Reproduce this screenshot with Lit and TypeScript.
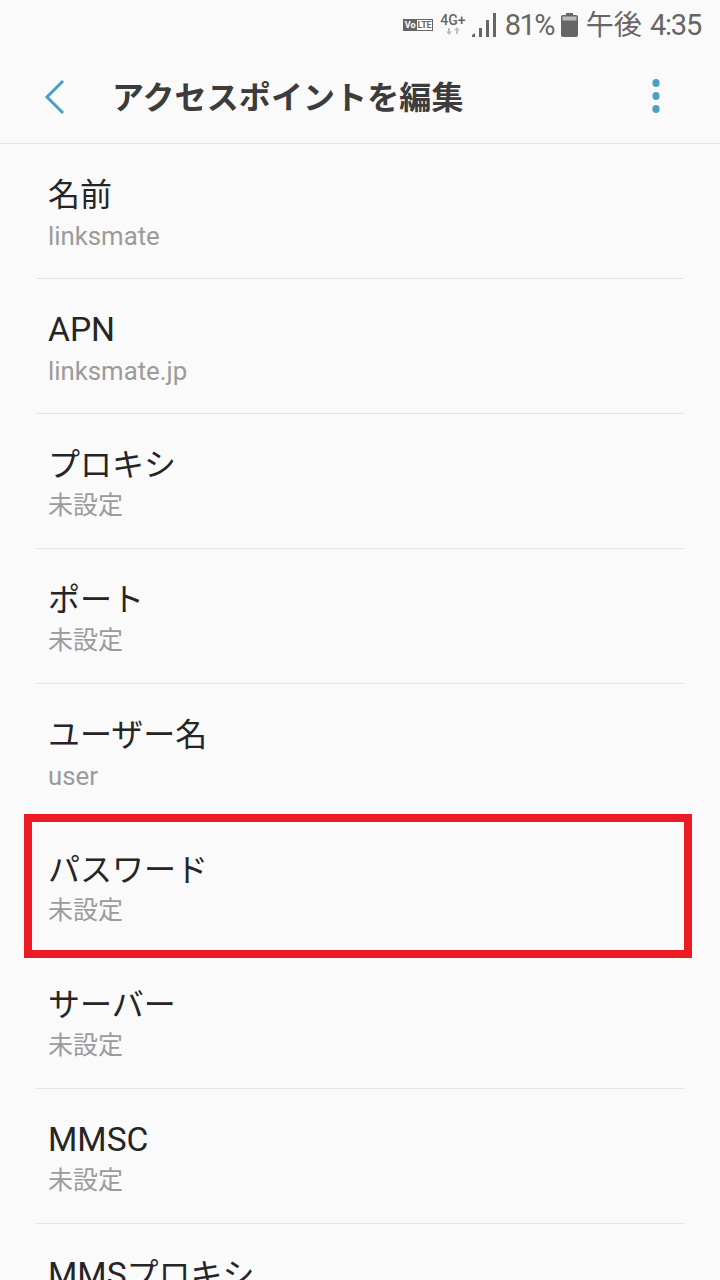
import { LitElement, html, css } from "lit";
import { customElement } from "lit/decorators.js";

const rows: [string, string][] = [
  ["名前", "linksmate"],
  ["APN", "linksmate.jp"],
  ["プロキシ", "未設定"],
  ["ポート", "未設定"],
  ["ユーザー名", "user"],
  ["パスワード", "未設定"],
  ["サーバー", "未設定"],
  ["MMSC", "未設定"],
  ["MMSプロキシ", "未設定"],
];

const runs = (text: string) =>
  text
    .split(/([\x20-\x7e]+)/)
    .filter(Boolean)
    .map((part) =>
      /^[\x20-\x7e]+$/.test(part) ? html`<span class="latin">${part}</span>` : part
    );

@customElement("app-root")
export class AppRoot extends LitElement {
  static styles = css`
    :host {
      display: block;
      width: 720px;
      height: 1280px;
      overflow: hidden;
      background: #fafafa;
      font-family: Roboto, "Noto Sans CJK JP", sans-serif;
    }
    .status {
      height: 50px;
      display: flex;
      justify-content: flex-end;
      align-items: center;
      padding-right: 19px;
      color: #666;
      font-size: 28px;
      line-height: 52px;
    }
    .volte {
      display: flex;
      width: 30px;
      height: 12px;
      margin-right: 7px;
      border: 1px solid #666;
      box-sizing: border-box;
      font-size: 9px;
      line-height: 10px;
      font-weight: 700;
      background: #fff;
    }
    .volte .vo { background: #666; color: #fff; padding: 0 1px; }
    .volte .lte { color: #666; padding-left: 1px; letter-spacing: -0.3px; }
    .net {
      width: 26px;
      height: 24px;
      margin-right: 6px;
      display: flex;
      flex-direction: column;
      align-items: center;
    }
    .net span {
      font-size: 14px;
      line-height: 14px;
      font-weight: 500;
      white-space: nowrap;
    }
    .net svg { display: block; }
    .signal { display: block; margin-right: 8px; }
    .battery { display: block; margin: 0 8px 0 7px; }
    .pct { font-size: 29px; letter-spacing: -1.6px; }
    .clock { white-space: nowrap; }
    .clock b { font-weight: 400; font-size: 29px; letter-spacing: -1.2px; margin-left: 8px; }
    .appbar {
      height: 94px;
      box-sizing: border-box;
      border-bottom: 1px solid #e6e6e6;
      display: flex;
      align-items: flex-start;
      padding: 26px 60px 0 44px;
    }
    .back { display: block; margin-top: 3px; }
    h1 {
      margin: 1px 0 0 46px;
      flex: 1;
      font-size: 32px;
      line-height: 42px;
      font-weight: 700;
      letter-spacing: 0.1px;
      color: #3c3c3c;
    }
    .more { display: block; margin-top: 2px; }
    .list { position: relative; }
    .row {
      height: 135px;
      box-sizing: border-box;
      margin: 0 36px;
      padding: 28px 12px 0;
      border-bottom: 1px solid #e4e4e4;
    }
    .title {
      font-size: 32px;
      line-height: 46px;
      color: #252525;
    }
    .sub {
      margin-top: 1px;
      font-size: 25px;
      line-height: 34px;
      color: #9b9b9b;
    }
    .latin { font-size: 1.05em; }
    .sub .latin { font-size: 1.03em; vertical-align: 1px; }
    .mark {
      position: absolute;
      left: 24px;
      top: 670px;
      width: 668px;
      height: 144px;
      box-sizing: border-box;
      border: 8px solid #ed1c24;
    }
  `;

  render() {
    return html`
      <div class="status">
        <div class="volte"><span class="vo">Vo</span><span class="lte">LTE</span></div>
        <div class="net">
          <span>4G+</span>
          <svg width="16" height="8" viewBox="0 0 16 8" fill="#bdbdbd">
            <path d="M4 8 1 4.5h2V1h2v3.5h2zM12 0l3 3.5h-2V7h-2V3.5H9z" />
          </svg>
        </div>
        <svg class="signal" width="25" height="24" viewBox="0 0 25 24" fill="#666">
          <path d="M0 24v-2l3-2v4zM7 24V15h3v9zM14 24V7h3v17zM21 24V0h3v24z" />
        </svg>
        <span class="pct">81%</span>
        <svg class="battery" width="17" height="24" viewBox="0 0 17 24">
          <path fill="#666" d="M5 0h7v2h3a2 2 0 0 1 2 2v18a2 2 0 0 1-2 2H2a2 2 0 0 1-2-2V4a2 2 0 0 1 2-2h3z" />
          <rect x="1.5" y="3.5" width="14" height="4" fill="#bdbdbd" />
        </svg>
        <span class="clock">午後<b>4:35</b></span>
      </div>
      <div class="appbar">
        <svg class="back" width="22" height="36" viewBox="0 0 22 36" fill="none" stroke="#4a9fc4" stroke-width="3">
          <path d="M19 2 3 18l16 16" />
        </svg>
        <h1>アクセスポイントを編集</h1>
        <svg class="more" width="8" height="36" viewBox="0 0 8 36" fill="#4a9fc4">
          <ellipse cx="4" cy="5" rx="3.6" ry="4" />
          <ellipse cx="4" cy="18" rx="3.6" ry="4" />
          <ellipse cx="4" cy="31" rx="3.6" ry="4" />
        </svg>
      </div>
      <div class="list">
        ${rows.map(
          ([t, s]) => html`<div class="row">
            <div class="title">${runs(t)}</div>
            <div class="sub">${runs(s)}</div>
          </div>`
        )}
        <div class="mark"></div>
      </div>
    `;
  }
}
